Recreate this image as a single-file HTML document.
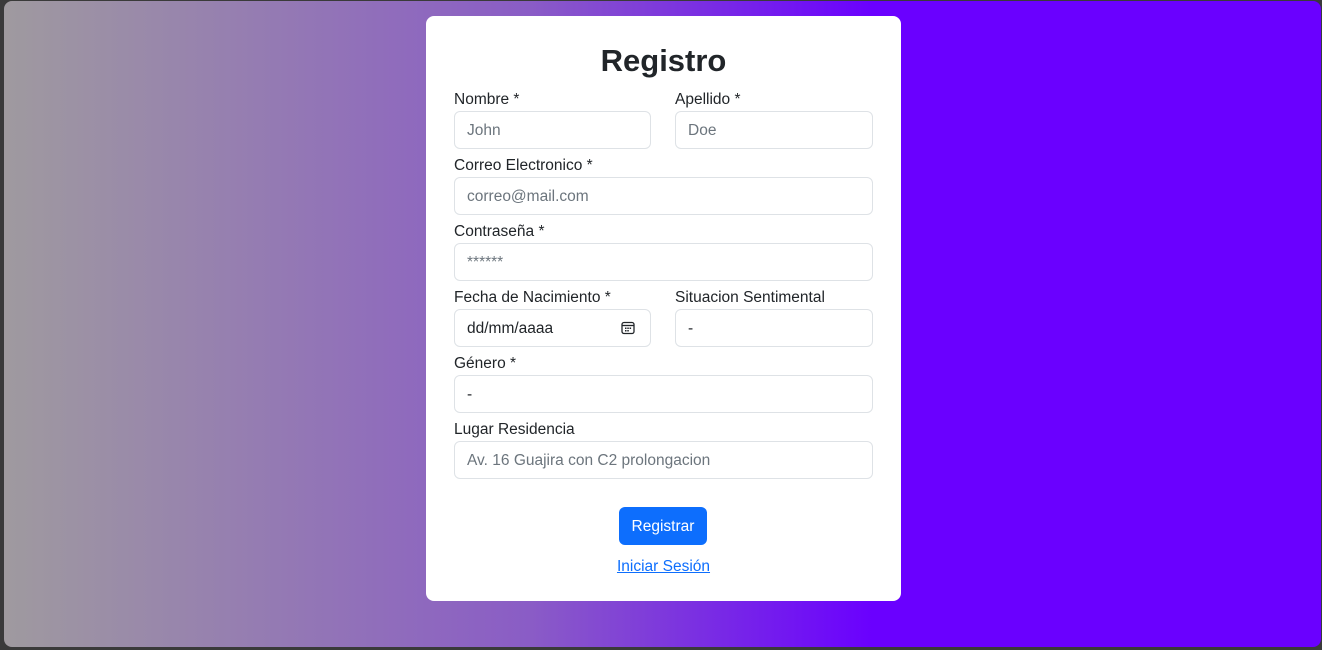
<!DOCTYPE html>
<html><head><meta charset="utf-8"><style>
*{box-sizing:border-box;margin:0;padding:0}
body{width:1322px;height:650px;background:#3a3a3a;font-family:"Liberation Sans",sans-serif;overflow:hidden;position:relative}
.bg{position:absolute;left:4px;top:1px;right:1px;bottom:3px;border-radius:8px;background:linear-gradient(90deg,#9f9a9f 0%,#8a5cc6 40%,#6a00ff 66%,#6a00ff 100%)}
.card{position:absolute;left:426px;top:16px;width:475px;height:585px;background:#fff;border-radius:8px}
h1{position:absolute;left:0;right:0;top:26px;text-align:center;font-size:31px;font-weight:bold;color:#212529;line-height:38px}
.l{position:absolute;font-size:15.5px;color:#212529}
.i{position:absolute;height:38px;border:1px solid #dee2e6;border-radius:6px;font-size:15.5px;color:#6c757d;padding:10px 12px;line-height:18px;white-space:nowrap}
.dk{color:#212529}
.btn{position:absolute;left:193px;top:491px;width:88px;height:38px;background:#0d6efd;color:#fff;border-radius:6px;font-size:15.5px;text-align:center;line-height:40px}
.a{position:absolute;left:0;right:0;top:542px;text-align:center;color:#0d6efd;text-decoration:underline;font-size:15.5px}
</style></head><body>
<div class="bg"></div>
<div class="card">
<h1>Registro</h1>
<div class="l" style="left:28px;top:75px">Nombre *</div>
<div class="l" style="left:249px;top:75px">Apellido *</div>
<div class="i" style="left:28px;top:95px;width:197px">John</div>
<div class="i" style="left:249px;top:95px;width:198px">Doe</div>
<div class="l" style="left:28px;top:141px">Correo Electronico *</div>
<div class="i" style="left:28px;top:161px;width:419px">correo@mail.com</div>
<div class="l" style="left:28px;top:207px">Contraseña *</div>
<div class="i" style="left:28px;top:227px;width:419px">******</div>
<div class="l" style="left:28px;top:273px">Fecha de Nacimiento *</div>
<div class="l" style="left:249px;top:273px">Situacion Sentimental</div>
<div class="i dk" style="left:28px;top:293px;width:197px">dd/mm/aaaa
<svg style="position:absolute;left:166px;top:11px" width="14" height="14" viewBox="0 0 14 14"><rect x="1" y="1.5" width="12" height="11" rx="2" fill="none" stroke="#212529" stroke-width="1.3"/><line x1="1" y1="4.5" x2="13" y2="4.5" stroke="#212529" stroke-width="1.3"/><g fill="#212529"><rect x="4" y="6.5" width="1.5" height="1.5"/><rect x="6.3" y="6.5" width="1.5" height="1.5"/><rect x="8.6" y="6.5" width="1.5" height="1.5"/><rect x="4" y="9" width="1.5" height="1.5"/><rect x="6.3" y="9" width="1.5" height="1.5"/></g></svg></div>
<div class="i dk" style="left:249px;top:293px;width:198px">-</div>
<div class="l" style="left:28px;top:339px">Género *</div>
<div class="i dk" style="left:28px;top:359px;width:419px">-</div>
<div class="l" style="left:28px;top:405px">Lugar Residencia</div>
<div class="i" style="left:28px;top:425px;width:419px">Av. 16 Guajira con C2 prolongacion</div>
<div class="btn">Registrar</div>
<div class="a">Iniciar Sesión</div>
</div>
</body></html>
